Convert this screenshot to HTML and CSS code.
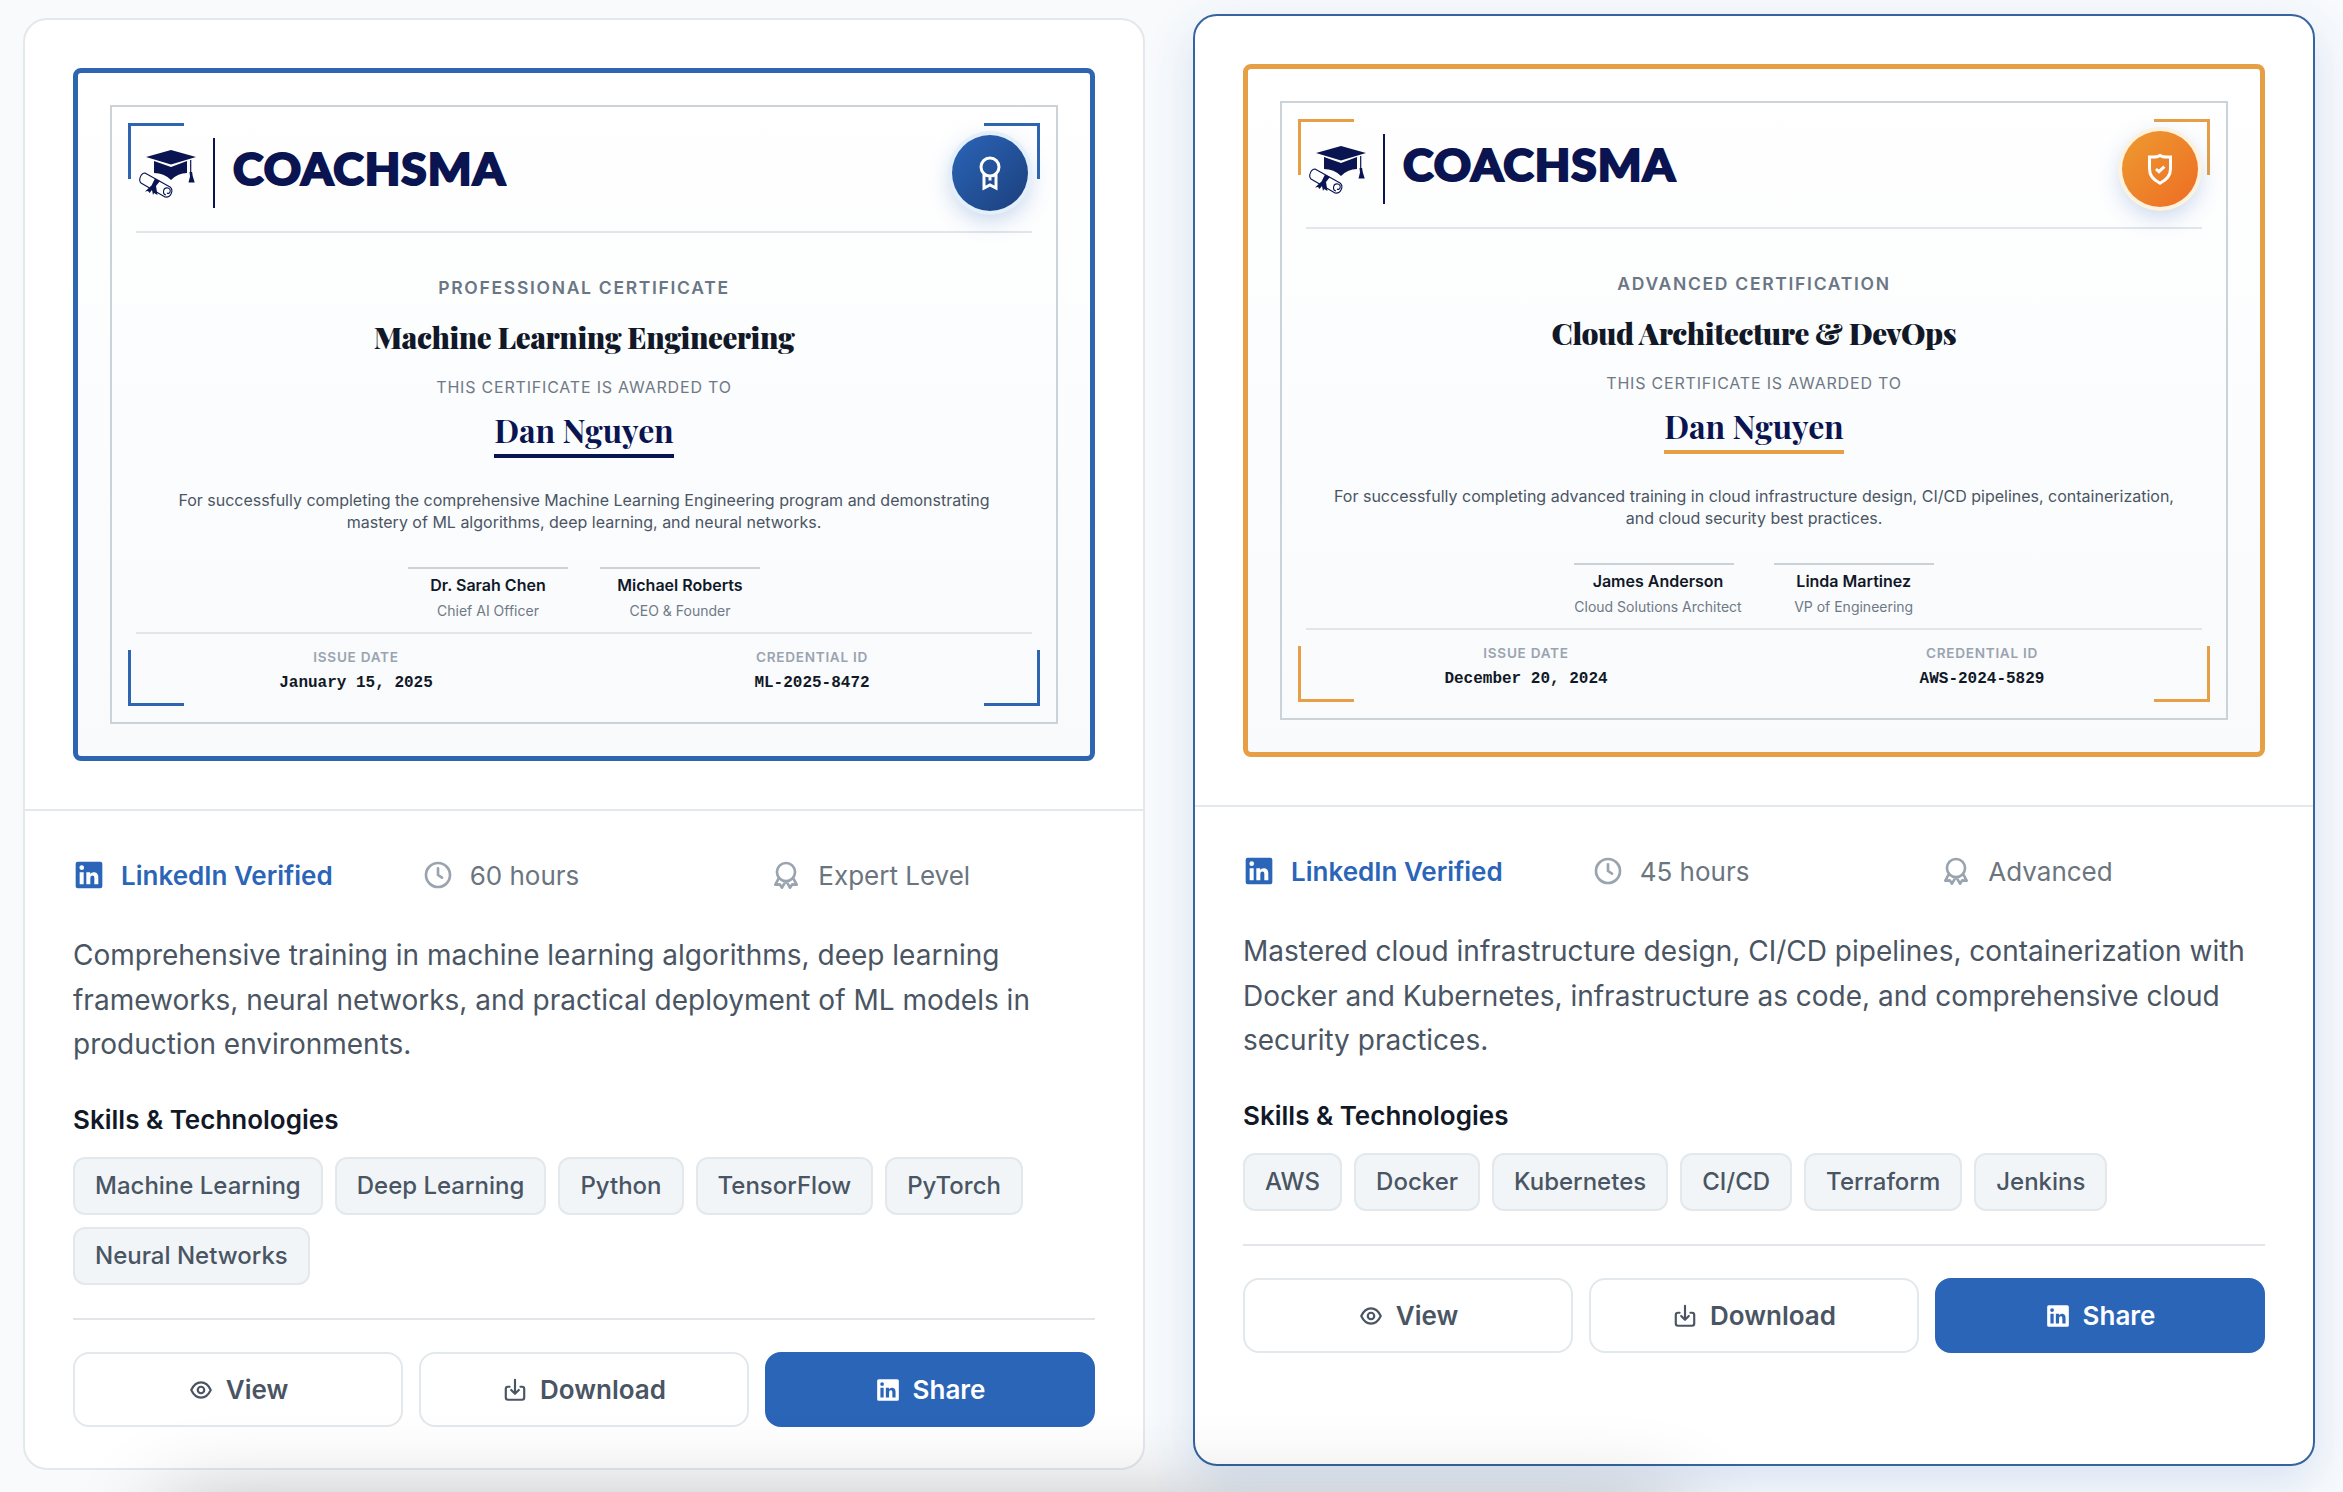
FILE: index.html
```html
<!DOCTYPE html>
<html lang="en">
<head>
    <meta charset="utf-8">
    <title>Certificates</title>
    <link rel="stylesheet" href="styles.css">
</head>
<body>

<!-- icon sprite -->
<svg class="sprite">
    <symbol id="i-linkedin" viewBox="0 0 24 24">
        <path d="M20.500 2h-17A1.500 1.500 0 0 0 2 3.500v17A1.500 1.500 0 0 0 3.500 22h17a1.500 1.500 0 0 0 1.500-1.500v-17A1.500 1.500 0 0 0 20.500 2zM8 19H5v-9h3zM6.500 8.250A1.750 1.750 0 1 1 8.300 6.500a1.780 1.780 0 0 1-1.800 1.750zM19 19h-3v-4.740c0-1.420-.6-1.930-1.380-1.930A1.740 1.740 0 0 0 13 14.190a.66.66 0 0 0 0 .14V19h-3v-9h2.900v1.300a3.110 3.110 0 0 1 2.700-1.400c1.550 0 3.360.86 3.360 3.660z" fill="currentColor"/>
    </symbol>
    <symbol id="i-clock" viewBox="0 0 24 24">
        <path d="M12 3a9 9 0 1 0 0 18a9 9 0 1 0 0-18M12 7v5l3 2" fill="none" stroke="currentColor" stroke-width="2" stroke-linecap="round" stroke-linejoin="round"/>
    </symbol>
    <symbol id="i-medal" viewBox="0 0 24 24">
        <path d="M12 3a6.800 6.800 0 1 0 0 13.600a6.800 6.800 0 1 0 0-13.600M6.500 14.500 4 19.300l3.300-.3 1.700 2.500 2.800-4.900M17.500 14.500 20 19.300l-3.300-.3-1.700 2.500-2.800-4.900" fill="none" stroke="currentColor" stroke-width="2" stroke-linecap="round" stroke-linejoin="round"/>
    </symbol>
    <symbol id="i-eye" viewBox="0 0 24 24">
        <path d="M3 12c2.200-4.700 5.300-7 9-7s6.800 2.300 9 7c-2.200 4.700-5.300 7-9 7s-6.800-2.300-9-7zM12 9a3 3 0 1 0 0 6a3 3 0 1 0 0-6" fill="none" stroke="currentColor" stroke-width="2" stroke-linejoin="round"/>
    </symbol>
    <symbol id="i-download" viewBox="0 0 24 24">
        <path d="M7 9H5.500A2 2 0 0 0 3.500 11v8a2 2 0 0 0 2 2h13a2 2 0 0 0 2-2v-8a2 2 0 0 0-2-2H17M12 2.500V15M8.500 12l3.500 3.500 3.500-3.500" fill="none" stroke="currentColor" stroke-width="2" stroke-linecap="round" stroke-linejoin="round"/>
    </symbol>
    <symbol id="i-logo" viewBox="0 0 60 84">
        <path d="M10 26 35 19 60 26 35 33.500zM18 30 35 36 51 30V42q-9 0-16 7-7-7-17-7z" fill="#0a1450"/>
        <path d="M54.700 29v13" stroke="#0a1450" stroke-width="1.200"/>
        <path d="M53.500 41h2.600l.6 4 2 6.500h-6.200l1.500-6z" fill="#0a1450"/>
        <path d="M9 42 34 56c4 3 1 11-5 10L5 52c-3-3 0-10 4-10zM30 64c-4-1-3-8 2-7 4 1 2 7-1 5" fill="none" stroke="#0a1450" stroke-width="1.100"/>
        <path d="M19 47.500l5 2.500-4 5 1.500 9-3.500-2-1 2-1-5-2.500 3-1.500-2-3 .5 6.500-6z" fill="#0a1450"/>
    </symbol>
</svg>

<div class="certs-grid">
    <div class="cert-card">
        <div class="cert-preview">
            <div class="cert-frame">
                <div class="cert-border"></div>
                <span class="corner tl"></span><span class="corner tr"></span><span class="corner bl"></span><span class="corner br"></span>
                <div class="cert-header">
                    <div class="logo"><svg class="logo-icon"><use href="#i-logo"/></svg><span class="logo-line"></span><span class="logo-text">COACHSMA</span></div>
                    <div class="seal">
                        <svg viewBox="0 0 24 24"><path d="M12 2a6 6 0 1 0 0 12a6 6 0 1 0 0-12M8 13v9l4-2 4 2v-9M12 15v2" fill="none" stroke="currentColor" stroke-width="2"/></svg>
                    </div>
                </div>
                <div class="cert-body">
                    <div class="cert-type">PROFESSIONAL CERTIFICATE</div>
                    <div class="cert-title">Machine Learning Engineering</div>
                    <div class="cert-awarded">THIS CERTIFICATE IS AWARDED TO</div>
                    <div class="cert-name">Dan Nguyen</div>
                    <div class="cert-text">For successfully completing the comprehensive Machine Learning Engineering program and demonstrating mastery of ML algorithms, deep learning, and neural networks.</div>
                    <div class="signatures">
                        <div class="signature"><div class="sign-line"></div><div class="sign-name">Dr. Sarah Chen</div><div class="sign-role">Chief AI Officer</div></div>
                        <div class="signature"><div class="sign-line"></div><div class="sign-name">Michael Roberts</div><div class="sign-role">CEO &amp; Founder</div></div>
                    </div>
                </div>
                <div class="cert-footer">
                    <div><div class="foot-label">ISSUE DATE</div><div class="foot-value">January 15, 2025</div></div>
                    <div><div class="foot-label">CREDENTIAL ID</div><div class="foot-value">ML-2025-8472</div></div>
                </div>
            </div>
        </div>
        <div class="cert-details">
            <div class="meta">
                <div class="meta-item verified"><svg><use href="#i-linkedin"/></svg><span>LinkedIn Verified</span></div>
                <div class="meta-item"><svg><use href="#i-clock"/></svg><span>60 hours</span></div>
                <div class="meta-item"><svg><use href="#i-medal"/></svg><span>Expert Level</span></div>
            </div>
            <p class="desc">Comprehensive training in machine learning algorithms, deep learning frameworks, neural networks, and practical deployment of ML models in production environments.</p>
            <div class="skills-title">Skills &amp; Technologies</div>
            <div class="tags">
                <span class="tag">Machine Learning</span><span class="tag">Deep Learning</span><span class="tag">Python</span><span class="tag">TensorFlow</span><span class="tag">PyTorch</span><span class="tag">Neural Networks</span>
            </div>
            <div class="actions">
                <button class="btn"><svg><use href="#i-eye"/></svg>View</button>
                <button class="btn"><svg><use href="#i-download"/></svg>Download</button>
                <button class="btn primary"><svg><use href="#i-linkedin"/></svg>Share</button>
            </div>
        </div>
    </div>

    <div class="cert-card active gold">
        <div class="cert-preview">
            <div class="cert-frame">
                <div class="cert-border"></div>
                <span class="corner tl"></span><span class="corner tr"></span><span class="corner bl"></span><span class="corner br"></span>
                <div class="cert-header">
                    <div class="logo"><svg class="logo-icon"><use href="#i-logo"/></svg><span class="logo-line"></span><span class="logo-text">COACHSMA</span></div>
                    <div class="seal">
                        <svg viewBox="0 0 24 24"><path d="M12 3c-1.500 1-4 1.200-7 1v8c0 4.500 3 7.500 7 9.500 4-2 7-5 7-9.500V4c-3 .2-5.500 0-7-1zM9.300 12l2 1.800 3.600-3.400" fill="none" stroke="currentColor" stroke-width="2"/></svg>
                    </div>
                </div>
                <div class="cert-body">
                    <div class="cert-type">ADVANCED CERTIFICATION</div>
                    <div class="cert-title">Cloud Architecture &amp; DevOps</div>
                    <div class="cert-awarded">THIS CERTIFICATE IS AWARDED TO</div>
                    <div class="cert-name">Dan Nguyen</div>
                    <div class="cert-text">For successfully completing advanced training in cloud infrastructure design, CI/CD pipelines, containerization, and cloud security best practices.</div>
                    <div class="signatures">
                        <div class="signature"><div class="sign-line"></div><div class="sign-name">James Anderson</div><div class="sign-role">Cloud Solutions Architect</div></div>
                        <div class="signature"><div class="sign-line"></div><div class="sign-name">Linda Martinez</div><div class="sign-role">VP of Engineering</div></div>
                    </div>
                </div>
                <div class="cert-footer">
                    <div><div class="foot-label">ISSUE DATE</div><div class="foot-value">December 20, 2024</div></div>
                    <div><div class="foot-label">CREDENTIAL ID</div><div class="foot-value">AWS-2024-5829</div></div>
                </div>
            </div>
        </div>
        <div class="cert-details">
            <div class="meta">
                <div class="meta-item verified"><svg><use href="#i-linkedin"/></svg><span>LinkedIn Verified</span></div>
                <div class="meta-item"><svg><use href="#i-clock"/></svg><span>45 hours</span></div>
                <div class="meta-item"><svg><use href="#i-medal"/></svg><span>Advanced</span></div>
            </div>
            <p class="desc">Mastered cloud infrastructure design, CI/CD pipelines, containerization with Docker and Kubernetes, infrastructure as code, and comprehensive cloud security practices.</p>
            <div class="skills-title">Skills &amp; Technologies</div>
            <div class="tags">
                <span class="tag">AWS</span><span class="tag">Docker</span><span class="tag">Kubernetes</span><span class="tag">CI/CD</span><span class="tag">Terraform</span><span class="tag">Jenkins</span>
            </div>
            <div class="actions">
                <button class="btn"><svg><use href="#i-eye"/></svg>View</button>
                <button class="btn"><svg><use href="#i-download"/></svg>Download</button>
                <button class="btn primary"><svg><use href="#i-linkedin"/></svg>Share</button>
            </div>
        </div>
    </div>
</div>

<div class="bottom-shade"></div>

</body>
</html>
```
FILE: styles.css
```css
* {
    box-sizing: border-box;
}

body {
    margin: 0;
    height: 1492px;
    overflow: hidden;
    background: #f8fafc;
    font-family: Inter, sans-serif;
    color: #4a5563;
}

.sprite {
    display: none;
}

.certs-grid {
    display: grid;
    grid-template-columns: 1122px 1122px;
    gap: 48px;
    padding: 18px 0 0 23px;
}

.cert-card {
    height: 1452px;
    background: #fff;
    border: 2px solid #e2e8ec;
    border-radius: 24px;
    --accent: #2f65b0;
}

.cert-card.active {
    margin-top: -4px;
    border-color: #35649f;
    box-shadow: 0 16px 48px rgba(43, 101, 184, 0.16);
}

.gold {
    --accent: #e79f45;
}

/* certificate */
.cert-preview {
    padding: 48px;
    border-bottom: 2px solid #e2e8ec;
}

.cert-frame {
    position: relative;
    height: 693px;
    padding: 58px;
    border: 5px solid var(--accent);
    border-radius: 8px;
    background: linear-gradient(#fff, #f8fafc);
}

.cert-border {
    position: absolute;
    inset: 32px;
    border: 2px solid #cbd3d9;
}

.corner {
    position: absolute;
    width: 56px;
    height: 56px;
    border: 0 solid var(--accent);
}

.tl { top: 50px; left: 50px; border-width: 3px 0 0 3px; }
.tr { top: 50px; right: 50px; border-width: 3px 3px 0 0; }
.bl { bottom: 50px; left: 50px; border-width: 0 0 3px 3px; }
.br { bottom: 50px; right: 50px; border-width: 0 3px 3px 0; }

.cert-header {
    display: flex;
    justify-content: space-between;
    height: 102px;
    border-bottom: 2px solid #e2e6ea;
}

.logo {
    display: flex;
    align-items: center;
    height: 84px;
}

.logo-icon {
    width: 60px;
    height: 84px;
}

.logo-line {
    width: 2px;
    height: 70px;
    margin: 0 18px 0 17px;
    background: #0a1450;
}

.logo-text {
    font: 900 43px/84px Lato, sans-serif;
    letter-spacing: 1px;
    color: #0a1450;
    -webkit-text-stroke: 2px #0a1450;
    padding-bottom: 8px;
    transform: scaleX(1.07);
    transform-origin: left;
}

.seal {
    position: relative;
    display: flex;
    align-items: center;
    justify-content: center;
    width: 76px;
    height: 76px;
    margin: 4px;
    border-radius: 50%;
    color: #fff;
    background: linear-gradient(135deg, #2b65b8, #1b3f7c);
    box-shadow: 0 0 0 4px #e3effa, 0 8px 24px rgba(43, 101, 184, 0.3);
}

.gold .seal {
    background: linear-gradient(135deg, #ed9b30, #ee6c24);
    box-shadow: 0 0 0 4px #fdf2dd, 0 8px 24px rgba(43, 101, 184, 0.3);
}

.seal svg {
    width: 36px;
    height: 36px;
}

.cert-body {
    height: 399px;
    padding-top: 42px;
    text-align: center;
}

.cert-type {
    font-size: 17.5px;
    font-weight: 600;
    line-height: 26px;
    letter-spacing: 1.7px;
    color: #6a7684;
}

.cert-title {
    margin-top: 16px;
    font: 900 29.6px/40px "Playfair Display", "Liberation Serif", serif;
    letter-spacing: -0.4px;
    color: #111827;
}

.cert-awarded {
    margin-top: 17px;
    font-size: 16px;
    line-height: 26px;
    letter-spacing: 0.8px;
    color: #6f7985;
}

.cert-name {
    display: inline-block;
    height: 52px;
    margin-top: 6px;
    font: 700 32px/47px "Playfair Display", "Liberation Serif", serif;
    color: #0a1450;
    border-bottom: 4px solid #0a1450;
}

.gold .cert-name {
    border-color: #e79f45;
}

.cert-text {
    width: 840px;
    margin: 31px auto 0;
    font-size: 16px;
    line-height: 22px;
    color: #4a5563;
}

.signatures {
    display: flex;
    justify-content: center;
    gap: 32px;
    margin-top: 34px;
}

.sign-line {
    width: 160px;
    height: 2px;
    background: #cbd3d9;
}

.sign-name {
    margin-top: 4px;
    font-size: 16px;
    font-weight: 600;
    line-height: 25px;
    color: #111827;
}

.sign-role {
    font-size: 14px;
    line-height: 26px;
    color: #6f7985;
}

.cert-footer {
    display: grid;
    grid-template-columns: 1fr 1fr;
    gap: 16px;
    padding-top: 12px;
    border-top: 2px solid #e2e6ea;
    text-align: center;
}

.foot-label {
    font-size: 13.6px;
    font-weight: 600;
    line-height: 22px;
    letter-spacing: 0.7px;
    color: #9aa4b0;
}

.foot-value {
    margin-top: 3px;
    font: 700 16px/24px "Courier New", "Liberation Mono", monospace;
    color: #111827;
}

/* details */
.cert-details {
    padding: 39px 48px;
}

.meta {
    display: grid;
    grid-template-columns: repeat(3, 1fr);
    gap: 24px;
}

.meta-item {
    display: flex;
    align-items: center;
    gap: 16px;
    height: 50px;
    font-size: 26px;
    color: #6b7580;
}

.meta-item svg {
    width: 32px;
    height: 32px;
    color: #9aa4ae;
}

.verified,
.verified svg {
    color: #2b65b8;
    font-weight: 600;
}

.desc {
    margin: 33px 0 0;
    font-size: 28px;
    line-height: 44.6px;
}

.skills-title {
    margin-top: 32px;
    font-size: 26px;
    font-weight: 600;
    line-height: 42px;
    color: #111827;
}

.tags {
    display: flex;
    flex-wrap: wrap;
    gap: 12px;
    margin-top: 16.5px;
}

.tag {
    height: 58px;
    padding: 0 20px;
    border: 2px solid #e2e8ec;
    border-radius: 12px;
    background: #f1f5f8;
    font-size: 24px;
    font-weight: 500;
    line-height: 54px;
}

.actions {
    display: grid;
    grid-template-columns: repeat(3, 1fr);
    gap: 16px;
    margin-top: 33px;
    padding-top: 32px;
    border-top: 2px solid #e2e6ea;
}

.btn {
    display: flex;
    align-items: center;
    justify-content: center;
    gap: 12px;
    height: 75px;
    border: 2px solid #e2e8ec;
    border-radius: 16px;
    background: transparent;
    font: 600 26px Inter, sans-serif;
    color: #4a5563;
}

.btn svg {
    width: 26px;
    height: 26px;
}

.btn.primary {
    background: #2b65b8;
    border-color: #2b65b8;
    color: #fff;
}

/* shadow of the panel below the fold */
.bottom-shade {
    position: fixed;
    left: 165px;
    top: 1510px;
    width: 1510px;
    height: 100px;
    box-shadow: 0 0 90px rgba(0, 0, 0, 0.3);
}
```
